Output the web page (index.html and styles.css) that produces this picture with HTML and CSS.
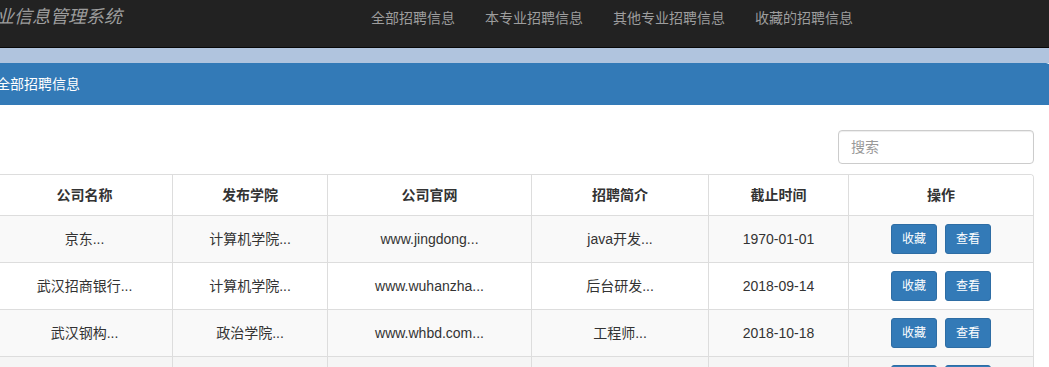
FILE: index.html
```html
<!DOCTYPE html>
<html lang="zh-CN">
<head>
<meta charset="utf-8">
<title>就业信息管理系统</title>
<link rel="stylesheet" href="styles.css">
</head>
<body>
<nav class="navbar">
  <div class="navbar-inner">
    <a class="brand" href="#">就业信息管理系统</a>
    <ul class="nav">
      <li><a href="#">全部招聘信息</a></li>
      <li><a href="#">本专业招聘信息</a></li>
      <li><a href="#">其他专业招聘信息</a></li>
      <li><a href="#">收藏的招聘信息</a></li>
    </ul>
  </div>
</nav>
<div class="band"></div>
<div class="panel">
  <div class="panel-heading">全部招聘信息</div>
  <div class="panel-body">
    <div class="toolbar">
      <input class="search" type="text" placeholder="搜索">
    </div>
    <div class="table-container">
      <table class="data-table">
        <colgroup>
          <col class="c1"><col class="c2"><col class="c3"><col class="c4"><col class="c5"><col class="c6">
        </colgroup>
        <thead>
          <tr>
            <th>公司名称</th><th>发布学院</th><th>公司官网</th><th>招聘简介</th><th>截止时间</th><th>操作</th>
          </tr>
        </thead>
        <tbody>
          <tr class="odd">
            <td>京东...</td><td>计算机学院...</td><td>www.jingdong...</td><td>java开发...</td><td>1970-01-01</td>
            <td><button class="btn">收藏</button><button class="btn">查看</button></td>
          </tr>
          <tr>
            <td>武汉招商银行...</td><td>计算机学院...</td><td>www.wuhanzha...</td><td>后台研发...</td><td>2018-09-14</td>
            <td><button class="btn">收藏</button><button class="btn">查看</button></td>
          </tr>
          <tr class="odd">
            <td>武汉钢构...</td><td>政治学院...</td><td>www.whbd.com...</td><td>工程师...</td><td>2018-10-18</td>
            <td><button class="btn">收藏</button><button class="btn">查看</button></td>
          </tr>
          <tr class="hover">
            <td>腾讯...</td><td>计算机学院...</td><td>www.tencent...</td><td>前端开发...</td><td>2018-11-20</td>
            <td><button class="btn">收藏</button><button class="btn">查看</button></td>
          </tr>
        </tbody>
      </table>
    </div>
  </div>
</div>
</body>
</html>
```

FILE: styles.css
```css
* { box-sizing: border-box; }

body {
  margin: 0;
  font-family: "Liberation Sans", "Noto Sans CJK SC", sans-serif;
  font-size: 14px;
  line-height: 20px;
  color: #333;
  background: #fff;
  overflow: hidden;
}

.navbar {
  background: #222;
  height: 48px;
  border-bottom: 1px solid #080808;
}

.navbar-inner {
  display: flex;
  align-items: flex-start;
}

.brand {
  margin-left: -22px;
  padding-top: 7px;
  font-size: 18px;
  line-height: 20px;
  font-style: italic;
  color: #9d9d9d;
  text-decoration: none;
  white-space: nowrap;
}

.nav {
  list-style: none;
  margin: 0 0 0 234px;
  padding: 0;
  display: flex;
}

.nav a {
  display: block;
  padding: 8px 15px 0;
  font-size: 14px;
  line-height: 20px;
  color: #9d9d9d;
  text-decoration: none;
  white-space: nowrap;
}

.band {
  height: 15px;
  background: #b0c4de;
}

.panel {
  margin-left: -20px;
  margin-right: -1px;
  border: 1px solid #337ab7;
  border-radius: 4px 4px 0 0;
  background: #fff;
}

.panel-heading {
  background: #337ab7;
  color: #fff;
  padding: 10px 15px;
  line-height: 20px;
  border-bottom: 1px solid #337ab7;
}

.panel-body {
  padding: 15px 15px 0;
}

.toolbar {
  display: flex;
  justify-content: flex-end;
  margin: 10px 0;
}

.search {
  width: 196px;
  height: 34px;
  padding: 6px 12px;
  font-family: inherit;
  font-size: 14px;
  color: #555;
  border: 1px solid #ccc;
  border-radius: 4px;
  box-shadow: inset 0 1px 1px rgba(0, 0, 0, 0.075);
  background: #fff;
}

.search::placeholder { color: #999; }

.table-container {
  border: 1px solid #ddd;
  border-bottom: none;
  border-radius: 4px 4px 0 0;
  overflow: hidden;
}

.data-table {
  width: 1036px;
  table-layout: fixed;
  border-collapse: separate;
  border-spacing: 0;
}

.c1 { width: 175px; }
.c2 { width: 155px; }
.c3 { width: 204px; }
.c4 { width: 177px; }
.c5 { width: 140px; }
.c6 { width: 185px; }

.data-table th,
.data-table td {
  text-align: center;
  vertical-align: middle;
  border-bottom: 1px solid #ddd;
  border-left: 1px solid #ddd;
  white-space: nowrap;
}

.data-table th:first-child,
.data-table td:first-child {
  border-left: none;
}

.data-table th {
  padding: 8px;
  line-height: 24px;
  font-weight: bold;
  background: #fff;
}

.data-table td {
  padding: 8px;
  height: 47px;
}

.data-table tr.odd td { background: #f9f9f9; }
.data-table tr.hover td { background: #f5f5f5; }

.btn {
  display: inline-block;
  padding: 5px 10px;
  font-family: inherit;
  font-size: 12px;
  line-height: 18px;
  color: #fff;
  background: #337ab7;
  border: 1px solid #2e6da4;
  border-radius: 3px;
  vertical-align: middle;
  cursor: pointer;
}

.btn + .btn { margin-left: 8px; }
```
